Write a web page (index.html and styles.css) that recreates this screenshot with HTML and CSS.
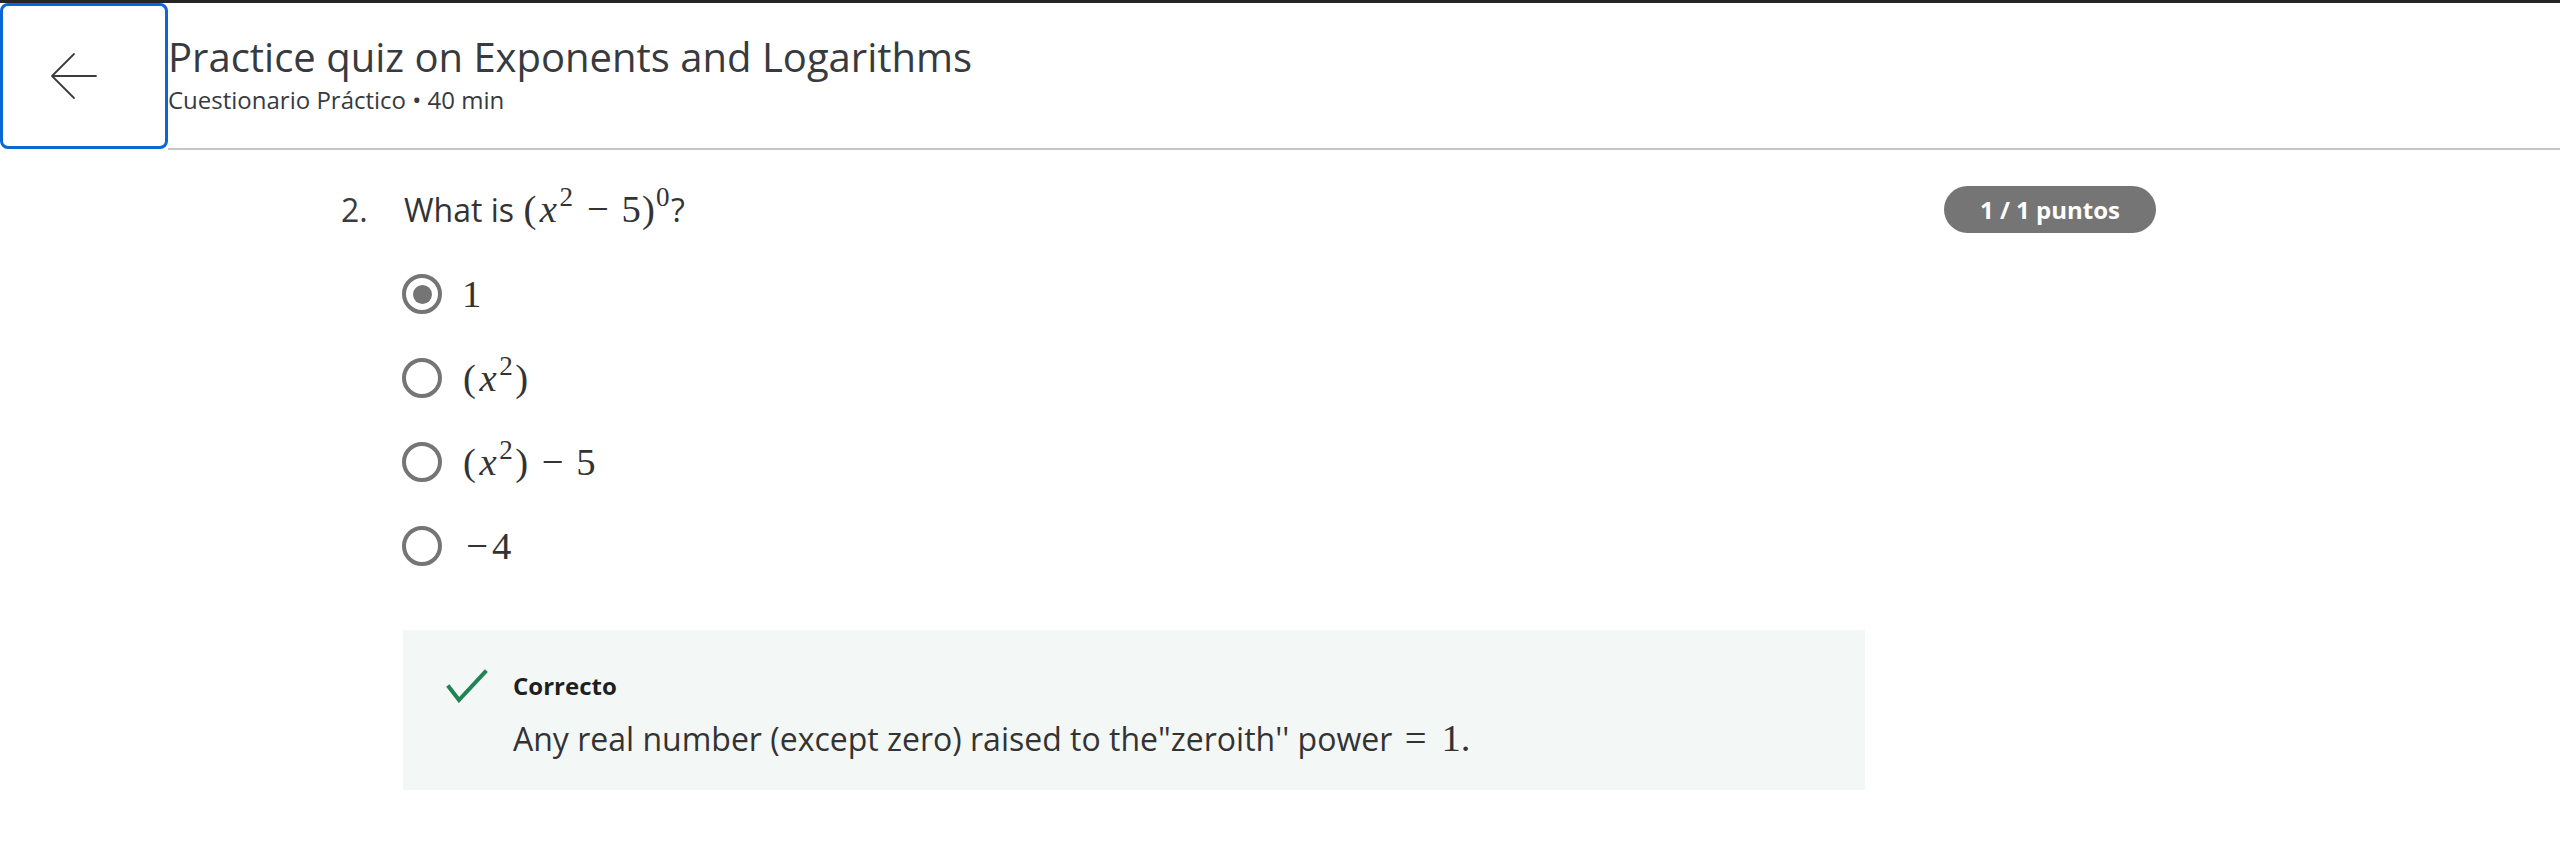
FILE: index.html
```html
<!DOCTYPE html>
<html lang="en">
<head>
<meta charset="utf-8">
<title>Practice quiz on Exponents and Logarithms</title>
<link rel="stylesheet" href="styles.css">
</head>
<body>
<div class="topbar"></div>
<header class="header">
  <button class="back" aria-label="Back">
    <svg class="back-icon" width="48" height="48" viewBox="0 0 48 48" fill="none" stroke="#3a3c40" stroke-width="1.8" stroke-linecap="round" stroke-linejoin="round">
      <path d="M46 24 H2 M24 2 L2 24 L24 46"/>
    </svg>
  </button>
  <div class="titles">
    <h1 class="title">Practice quiz on Exponents and Logarithms</h1>
    <div class="subtitle">Cuestionario Práctico • 40 min</div>
  </div>
</header>
<main class="content">
  <section class="question">
    <div class="qhead">
      <span class="qnum">2.</span>
      <div class="qtext">What is <span class="math"><span class="p">(</span><span class="mi">x</span><sup>2</sup><span class="mo">−</span><span class="mn">5</span><span class="p">)</span><sup>0</sup></span>?</div>
      <span class="badge">1 / 1 puntos</span>
    </div>
    <ul class="options">
      <li class="option"><span class="radio checked"></span><span class="math"><span class="mn">1</span></span></li>
      <li class="option"><span class="radio"></span><span class="math"><span class="p">(</span><span class="mi">x</span><sup>2</sup><span class="p">)</span></span></li>
      <li class="option"><span class="radio"></span><span class="math"><span class="p">(</span><span class="mi">x</span><sup>2</sup><span class="p">)</span><span class="mo">−</span><span class="mn">5</span></span></li>
      <li class="option"><span class="radio"></span><span class="math"><span class="mo un">−</span><span class="mn">4</span></span></li>
    </ul>
    <div class="feedback">
      <svg class="check" width="42" height="34" viewBox="0 0 42 34" fill="none" stroke="#1f8354" stroke-width="4" stroke-linecap="square">
        <path d="M3 18 L13 31 L39 3"/>
      </svg>
      <div class="fb-body">
        <div class="fb-title">Correcto</div>
        <div class="fb-text">Any real number (except zero) raised to the"zeroith'' power <span class="math"><span class="mo rel">=</span><span class="mn">1</span>.</span></div>
      </div>
    </div>
  </section>
</main>
</body>
</html>
```

FILE: styles.css
```css
html, body {
  margin: 0;
  padding: 0;
  background: #ffffff;
}

body {
  font-family: "Open Sans", "Noto Sans", sans-serif;
  color: #333333;
}

.topbar {
  height: 3px;
  background: #262626;
}

.header {
  display: flex;
}

.back {
  flex: none;
  width: 168px;
  height: 146px;
  box-sizing: border-box;
  margin: 0;
  padding: 0 0 0 47px;
  border: 3px solid #0b66d6;
  border-radius: 8px;
  background: #ffffff;
  display: flex;
  align-items: center;
  justify-content: flex-start;
  cursor: pointer;
}

.back-icon {
  display: block;
}

.titles {
  flex: 1;
  height: 147px;
  box-sizing: border-box;
  border-bottom: 2px solid #c6c6c6;
  padding-top: 27px;
}

.title {
  margin: 0;
  font-size: 40px;
  line-height: 54px;
  font-weight: 400;
  color: #373a3e;
}

.subtitle {
  margin-top: 0;
  font-size: 24px;
  line-height: 32px;
  color: #373a3e;
}

.content {
  padding: 36px 0 60px 341px;
}

.question {
  width: 1815px;
}

.qhead {
  display: flex;
  align-items: center;
  height: 47px;
}

.qnum {
  width: 63px;
  flex: none;
  font-size: 32px;
  line-height: 48px;
  color: #3c3c3c;
}

.qtext {
  font-size: 32px;
  line-height: 48px;
  color: #333333;
}

.badge {
  margin-left: auto;
  width: 212px;
  height: 47px;
  border-radius: 24px;
  background: #757575;
  color: #ffffff;
  font-weight: 700;
  font-size: 24px;
  line-height: 47px;
  text-align: center;
}

.math {
  font-family: "Liberation Serif", "Times New Roman", serif;
  font-size: 38.7px;
  color: #333333;
  white-space: nowrap;
}

.p {
  display: inline-block;
  width: 0.389em;
  text-align: center;
}

.mi {
  display: inline-block;
  width: 0.572em;
  text-align: center;
  font-style: italic;
}

.mn {
  display: inline-block;
  width: 0.5em;
  text-align: center;
}

.mo {
  display: inline-block;
  width: 0.778em;
  text-align: center;
  margin: 0 0.222em;
}

.mo.un {
  margin: 0;
}

.mo.rel {
  margin: 0 0.278em 0 0;
}

.math sup {
  display: inline-block;
  width: 0.5em;
  text-align: left;
  font-size: 0.7em;
  line-height: 0;
  vertical-align: 0.6em;
  padding-right: 0.05em;
}

.options {
  list-style: none;
  margin: 19px 0 0 61px;
  padding: 0;
}

.option {
  height: 84px;
  display: flex;
  align-items: center;
  gap: 20px;
}

.radio {
  flex: none;
  width: 40px;
  height: 40px;
  box-sizing: border-box;
  border: 4px solid #757575;
  border-radius: 50%;
  display: flex;
  align-items: center;
  justify-content: center;
}

.radio.checked::after {
  content: "";
  width: 19px;
  height: 19px;
  border-radius: 50%;
  background: #757575;
}

.feedback {
  margin: 42px 0 0 62px;
  width: 1462px;
  height: 160px;
  box-sizing: border-box;
  background: #f3f8f6;
  padding: 39px 0 0 43px;
  display: flex;
  align-items: flex-start;
  gap: 25px;
}

.check {
  flex: none;
  display: block;
}

.fb-title {
  font-size: 24px;
  font-weight: 700;
  line-height: 36px;
  color: #1f1f1f;
  margin-top: -1px;
}

.fb-text {
  margin-top: 10px;
  font-size: 32px;
  line-height: 48px;
  color: #333333;
}
```
